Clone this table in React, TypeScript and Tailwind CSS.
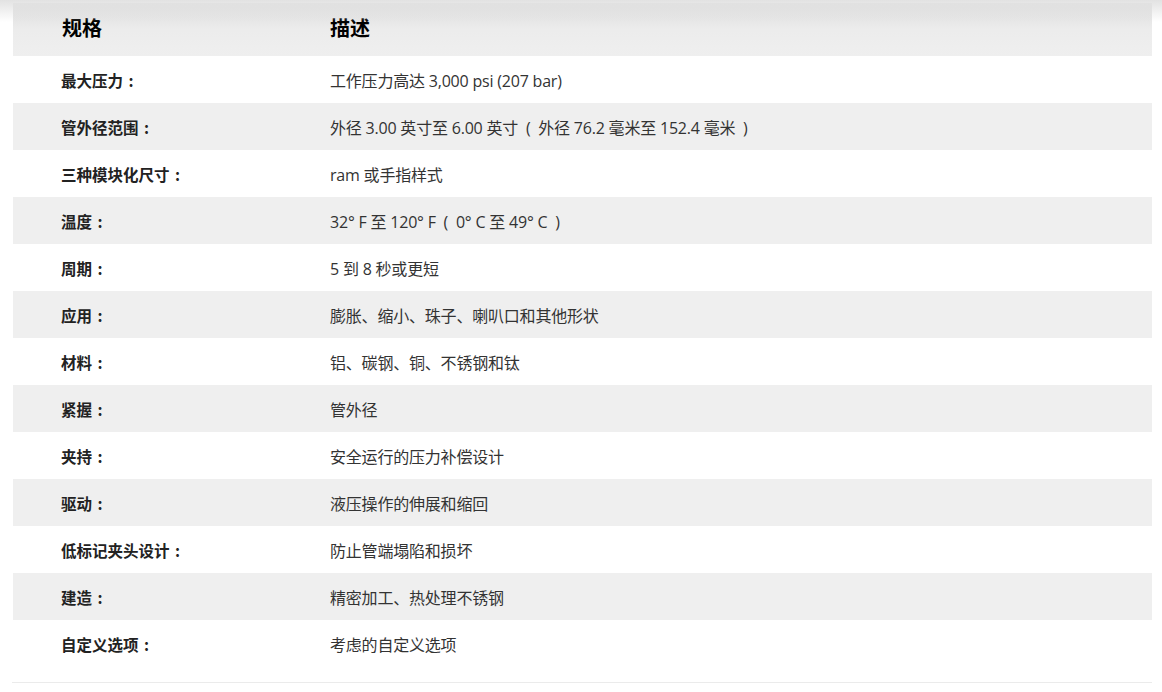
import React from "react";

const rows: [string, string][] = [
  ["最大压力", "工作压力高达 3,000 psi (207 bar)"],
  ["管外径范围", "外径 3.00 英寸至 6.00 英寸\u2002(\u2002外径 76.2 毫米至 152.4 毫米\u2002)"],
  ["三种模块化尺寸", "ram 或手指样式"],
  ["温度", "32° F 至 120° F\u2002(\u20020° C 至 49° C\u2002)"],
  ["周期", "5 到 8 秒或更短"],
  ["应用", "膨胀、缩小、珠子、喇叭口和其他形状"],
  ["材料", "铝、碳钢、铜、不锈钢和钛"],
  ["紧握", "管外径"],
  ["夹持", "安全运行的压力补偿设计"],
  ["驱动", "液压操作的伸展和缩回"],
  ["低标记夹头设计", "防止管端塌陷和损坏"],
  ["建造", "精密加工、热处理不锈钢"],
  ["自定义选项", "考虑的自定义选项"],
];

const cjk = '"Noto Sans CJK SC", "Noto Sans", sans-serif';
const latin = '"Open Sans", "Noto Sans CJK SC", sans-serif';

export default function App() {
  return (
    <div
      className="relative bg-white w-[1162px] h-[692px] overflow-hidden text-[#333]"
      style={{ fontFamily: cjk }}
    >
      {/* top shadow */}
      <div className="pointer-events-none absolute inset-x-0 top-0 h-[22px] bg-gradient-to-b from-[#e2e2e2] to-transparent" />

      <div className="pt-[3px] pl-[13px] w-[1152px]">
        {/* header */}
        <div className="flex h-[53px] items-center pb-[4px] bg-gradient-to-b from-[#dddddd] via-[#ececec] to-[#efefef] text-[20px] font-bold text-black">
          <div className="w-[317px] pl-[49px]">规格</div>
          <div>描述</div>
        </div>

        {rows.map(([k, v], i) => (
          <div
            key={k}
            className={`flex h-[47px] items-center pt-[3px] ${
              i % 2 === 1 ? "bg-[#efefef]" : "bg-white"
            }`}
          >
            <div className="w-[317px] pl-[48px] text-[15.5px] font-bold text-[#222]">
              {k}
              <span className="inline-block w-[16px] text-center">:</span>
            </div>
            <div
              className="text-[16px] tracking-[-0.2px] whitespace-pre"
              style={{ fontFamily: latin }}
            >
              {v}
            </div>
          </div>
        ))}

        <div className="mt-[15px] -ml-px h-px bg-[#ebebeb]" />
      </div>
    </div>
  );
}
